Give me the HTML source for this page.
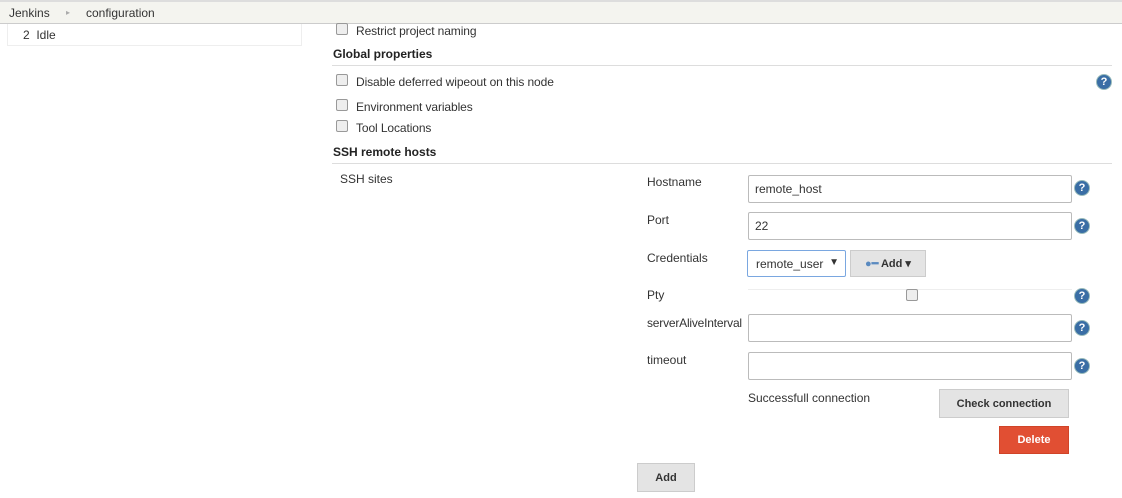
<!DOCTYPE html>
<html><head><style>
body{margin:0;width:1122px;height:498px;background:#fff;font-family:"Liberation Sans",sans-serif;font-size:12px;color:#333;position:relative;overflow:hidden}
.a{position:absolute}
.top{left:0;top:0;width:1122px;height:24px;background:#f4f4ef;border-top:2px solid #ddd;border-bottom:1px solid #ccc;box-sizing:border-box}
.cb{width:10px;height:10px;border:1px solid #999;border-radius:2px;background:#eee}
.h{font-weight:bold;font-size:12px;color:#222}
.line{height:1px;background:#ddd}
.in{border:1px solid #bbb;border-radius:2px;background:#fff;box-sizing:border-box}
.q{width:16px;height:16px;border-radius:50%;background:#3a6ea5;border:1px solid #9bb;color:#fff;font-weight:bold;font-size:11px;text-align:center;line-height:15px;box-sizing:border-box}
.btn{background:#e4e4e4;border:1px solid #ccc;box-sizing:border-box;font-weight:bold;text-align:center;color:#333;font-size:11px}
</style></head><body>
<div class="a top"></div>
<div class="a" style="left:9px;top:6px">Jenkins</div>
<div class="a" style="left:66px;top:6px;color:#aaa;font-size:8px;line-height:14px">▸</div>
<div class="a" style="left:86px;top:6px">configuration</div>
<div class="a" style="left:7px;top:24px;width:295px;height:22px;border:1px solid #eee;border-top:none;box-sizing:border-box"></div>
<div class="a" style="left:23px;top:28px">2&nbsp; Idle</div>

<div class="a cb" style="left:336px;top:23px"></div>
<div class="a" style="left:356px;top:24px;letter-spacing:-0.1px">Restrict project naming</div>
<div class="a h" style="left:333px;top:47px">Global properties</div>
<div class="a line" style="left:332px;top:65px;width:780px"></div>
<div class="a cb" style="left:336px;top:74px"></div>
<div class="a" style="left:356px;top:75px;letter-spacing:-0.1px">Disable deferred wipeout on this node</div>
<div class="a cb" style="left:336px;top:99px"></div>
<div class="a" style="left:356px;top:100px;letter-spacing:-0.1px">Environment variables</div>
<div class="a cb" style="left:336px;top:120px"></div>
<div class="a" style="left:356px;top:121px;letter-spacing:-0.1px">Tool Locations</div>
<div class="a h" style="left:333px;top:145px">SSH remote hosts</div>
<div class="a line" style="left:332px;top:163px;width:780px"></div>
<div class="a" style="left:340px;top:172px">SSH sites</div>

<div class="a" style="left:647px;top:175px">Hostname</div>
<div class="a in" style="left:748px;top:175px;width:324px;height:28px;padding:6px;">remote_host</div>
<div class="a" style="left:647px;top:213px">Port</div>
<div class="a in" style="left:748px;top:212px;width:324px;height:28px;padding:6px">22</div>
<div class="a" style="left:647px;top:251px">Credentials</div>
<div class="a in" style="left:747px;top:250px;width:99px;height:27px;border-color:#7aa7e0;padding:6px 8px">remote_user<span style="position:absolute;right:6px;font-size:10px">▼</span></div>
<div class="a btn" style="left:850px;top:250px;width:76px;height:27px;line-height:26px"><span style="color:#5a8ac0">●━</span> Add ▾</div>
<div class="a" style="left:647px;top:288px">Pty</div>
<div class="a line" style="left:748px;top:289px;width:324px;background:#eee"></div>
<div class="a cb" style="left:906px;top:289px"></div>
<div class="a" style="left:647px;top:316px;letter-spacing:-0.2px">serverAliveInterval</div>
<div class="a in" style="left:748px;top:314px;width:324px;height:28px"></div>
<div class="a" style="left:647px;top:353px">timeout</div>
<div class="a in" style="left:748px;top:352px;width:324px;height:28px"></div>
<div class="a" style="left:748px;top:391px">Successfull connection</div>
<div class="a btn" style="left:939px;top:389px;width:130px;height:29px;line-height:28px">Check connection</div>
<div class="a btn" style="left:999px;top:426px;width:70px;height:28px;line-height:27px;background:#e14f33;border-color:#d04428;color:#fff">Delete</div>
<div class="a btn" style="left:637px;top:463px;width:58px;height:29px;line-height:28px">Add</div>

<div class="a q" style="left:1096px;top:74px">?</div>
<div class="a q" style="left:1074px;top:180px">?</div>
<div class="a q" style="left:1074px;top:218px">?</div>
<div class="a q" style="left:1074px;top:288px">?</div>
<div class="a q" style="left:1074px;top:320px">?</div>
<div class="a q" style="left:1074px;top:358px">?</div>
</body></html>
